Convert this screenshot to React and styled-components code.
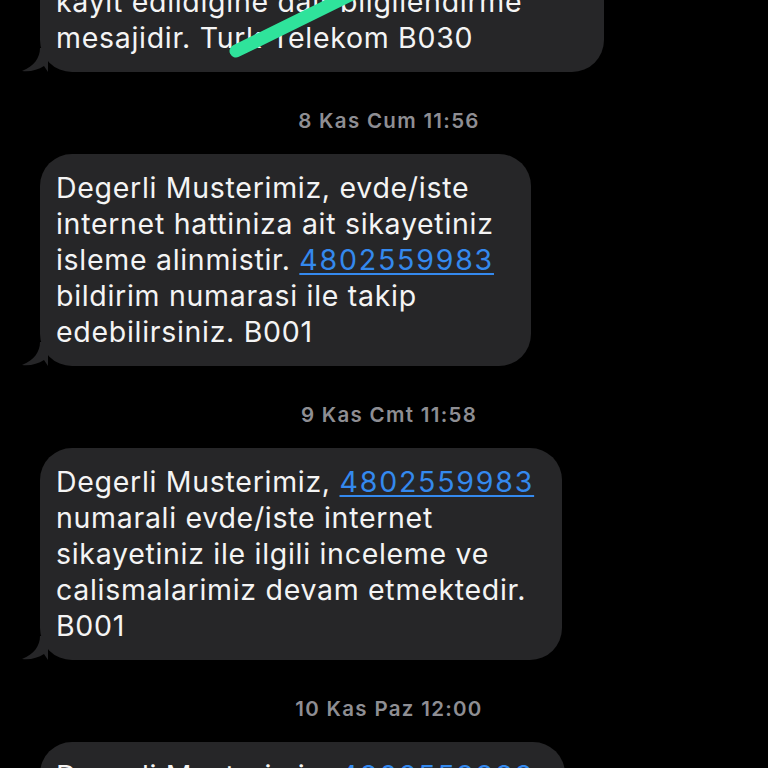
import React from "react";
import styled, { createGlobalStyle } from "styled-components";

const GlobalStyle = createGlobalStyle`
  html, body { margin: 0; padding: 0; background: #000; }
  body { overflow: hidden; }
`;

const Page = styled.div`
  position: relative;
  width: 768px;
  height: 768px;
  overflow: hidden;
  background: #000;
  display: flex;
  flex-direction: column;
  align-items: flex-start;
  padding-left: 40px;
  box-sizing: border-box;
  font-family: Inter, "Liberation Sans", Arial, sans-serif;
`;

const Bubble = styled.div`
  position: relative;
  width: ${(p) => p.$width}px;
  margin-top: ${(p) => p.$offset || 0}px;
  box-sizing: border-box;
  background: #262628;
  border-radius: 32px;
  padding: 16px 16px;
  color: #f4f4f4;
  font-size: 28.5px;
  line-height: 36px;
  letter-spacing: 0.7px;
  flex-shrink: 0;
`;

const Line = styled.div`
  white-space: nowrap;
`;

const Link = styled.span`
  color: #3489ee;
  letter-spacing: 1.8px;
  text-decoration: underline;
  text-decoration-thickness: 2px;
  text-underline-offset: 3px;
`;

const Tail = styled.svg`
  position: absolute;
  left: -18px;
  bottom: 0;
  width: 26px;
  height: 24px;
`;

const Stamp = styled.div`
  align-self: stretch;
  margin: 37px 0 21px -40px;
  padding-left: 10px;
  text-align: center;
  font-size: 20.5px;
  line-height: 24px;
  font-weight: 600;
  letter-spacing: 1.3px;
  color: #8e8e93;
  flex-shrink: 0;
`;

const Scribble = styled.svg`
  position: absolute;
  left: 0;
  top: 0;
  width: 768px;
  height: 80px;
  pointer-events: none;
`;

const BubbleTail = () => (
  <Tail viewBox="0 0 26 24">
    <path d="M18 0 C18 10 12 18 0 23 C8 24 16 22 22 18 L26 24 L26 0 Z" fill="#262628" />
  </Tail>
);

const messages = [
  {
    width: 564,
    offset: -32,
    lines: [["kayit edildigine dair bilgilendirme"], ["mesajidir. Turk Telekom B030"]],
    stamp: "8 Kas Cum 11:56",
  },
  {
    width: 491,
    lines: [
      ["Degerli Musterimiz, evde/iste"],
      ["internet hattiniza ait sikayetiniz"],
      ["isleme alinmistir. ", { link: "4802559983" }],
      ["bildirim numarasi ile takip"],
      ["edebilirsiniz. B001"],
    ],
    stamp: "9 Kas Cmt 11:58",
  },
  {
    width: 522,
    lines: [
      ["Degerli Musterimiz, ", { link: "4802559983" }],
      ["numarali evde/iste internet"],
      ["sikayetiniz ile ilgili inceleme ve"],
      ["calismalarimiz devam etmektedir."],
      ["B001"],
    ],
    stamp: "10 Kas Paz 12:00",
  },
  {
    width: 525,
    lines: [
      ["Degerli Musterimiz, ", { link: "4802559983" }],
      ["numarali evde/iste internet"],
    ],
  },
];

export default function App() {
  return (
    <>
      <GlobalStyle />
      <Page>
        {messages.map((m, i) => (
          <React.Fragment key={i}>
            <Bubble $width={m.width} $offset={m.offset}>
              {m.lines.map((parts, j) => (
                <Line key={j}>
                  {parts.map((p, k) =>
                    typeof p === "string" ? p : <Link key={k}>{p.link}</Link>
                  )}
                </Line>
              ))}
              <BubbleTail />
            </Bubble>
            {m.stamp && <Stamp>{m.stamp}</Stamp>}
          </React.Fragment>
        ))}
        <Scribble viewBox="0 0 768 80">
          <path d="M236 51 L352 -6" stroke="#2fe39b" strokeWidth="13" strokeLinecap="round" fill="none" />
        </Scribble>
      </Page>
    </>
  );
}
